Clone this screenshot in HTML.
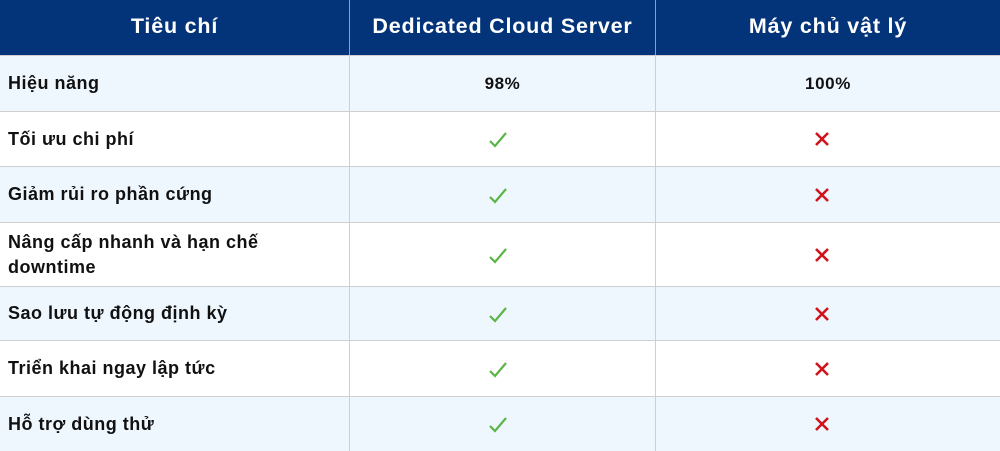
<!DOCTYPE html>
<html><head><meta charset="utf-8"><style>
*{margin:0;padding:0;box-sizing:border-box}
body{width:1000px;height:450px;overflow:hidden;background:#fff;font-family:"Liberation Sans","Noto Sans CJK SC",sans-serif}
.r{position:absolute;left:0;width:1000px;border-bottom:1px solid #cfcfcf}
.c{position:absolute;top:0;bottom:0;display:flex;align-items:center}
.c1{left:0;width:349px;padding-left:8px;font-weight:bold;font-size:18px;letter-spacing:0.5px;color:#111;line-height:25px}
.c2{left:349px;width:306px;justify-content:center;border-left:1px solid #cfcfcf;font-weight:bold;font-size:17px;letter-spacing:0.6px;color:#111}
.c3{left:655px;width:345px;justify-content:center;border-left:1px solid #cfcfcf;font-weight:bold;font-size:17px;letter-spacing:0.6px;color:#111}
.h{background:#03347a;color:#fff;border-bottom:1px solid #cfcfcf}
.h .c{color:#fff;font-size:21.5px;letter-spacing:0.8px;justify-content:center;padding:0 0 2px 0}
.h .c2,.h .c3{border-left:1px solid #8aa0c0}
.l{background:#eff7fe}
.r:not(.h) .c2 svg{margin-right:10px}
.r:not(.h) .c3 svg{margin-right:12px}
</style></head><body>
<div class="r h" style="top:0;height:56px"><div class="c c1">Tiêu chí</div><div class="c c2">Dedicated Cloud Server</div><div class="c c3">Máy chủ vật lý</div></div>
<div class="r l" style="top:56px;height:56px"><div class="c c1">Hiệu năng</div><div class="c c2">98%</div><div class="c c3">100%</div></div>
<div class="r" style="top:112px;height:55px"><div class="c c1">Tối ưu chi phí</div><div class="c c2"><svg width="18" height="18" viewBox="0 0 18 18"><path d="M1 11 L6 16 L17 3" fill="none" stroke="#5bb548" stroke-width="2.2"/></svg></div><div class="c c3"><svg width="16" height="16" viewBox="0 0 16 16"><path d="M2 2L14 14M14 2L2 14" stroke="#d0141c" stroke-width="2.6"/></svg></div></div>
<div class="r l" style="top:167px;height:56px"><div class="c c1">Giảm rủi ro phần cứng</div><div class="c c2"><svg width="18" height="18" viewBox="0 0 18 18"><path d="M1 11 L6 16 L17 3" fill="none" stroke="#5bb548" stroke-width="2.2"/></svg></div><div class="c c3"><svg width="16" height="16" viewBox="0 0 16 16"><path d="M2 2L14 14M14 2L2 14" stroke="#d0141c" stroke-width="2.6"/></svg></div></div>
<div class="r" style="top:223px;height:64px"><div class="c c1">Nâng cấp nhanh và hạn chế<br>downtime</div><div class="c c2"><svg width="18" height="18" viewBox="0 0 18 18"><path d="M1 11 L6 16 L17 3" fill="none" stroke="#5bb548" stroke-width="2.2"/></svg></div><div class="c c3"><svg width="16" height="16" viewBox="0 0 16 16"><path d="M2 2L14 14M14 2L2 14" stroke="#d0141c" stroke-width="2.6"/></svg></div></div>
<div class="r l" style="top:287px;height:54px"><div class="c c1">Sao lưu tự động định kỳ</div><div class="c c2"><svg width="18" height="18" viewBox="0 0 18 18"><path d="M1 11 L6 16 L17 3" fill="none" stroke="#5bb548" stroke-width="2.2"/></svg></div><div class="c c3"><svg width="16" height="16" viewBox="0 0 16 16"><path d="M2 2L14 14M14 2L2 14" stroke="#d0141c" stroke-width="2.6"/></svg></div></div>
<div class="r" style="top:341px;height:56px"><div class="c c1">Triển khai ngay lập tức</div><div class="c c2"><svg width="18" height="18" viewBox="0 0 18 18"><path d="M1 11 L6 16 L17 3" fill="none" stroke="#5bb548" stroke-width="2.2"/></svg></div><div class="c c3"><svg width="16" height="16" viewBox="0 0 16 16"><path d="M2 2L14 14M14 2L2 14" stroke="#d0141c" stroke-width="2.6"/></svg></div></div>
<div class="r l" style="top:397px;height:54px;border-bottom:none"><div class="c c1">Hỗ trợ dùng thử</div><div class="c c2"><svg width="18" height="18" viewBox="0 0 18 18"><path d="M1 11 L6 16 L17 3" fill="none" stroke="#5bb548" stroke-width="2.2"/></svg></div><div class="c c3"><svg width="16" height="16" viewBox="0 0 16 16"><path d="M2 2L14 14M14 2L2 14" stroke="#d0141c" stroke-width="2.6"/></svg></div></div>
</body></html>
